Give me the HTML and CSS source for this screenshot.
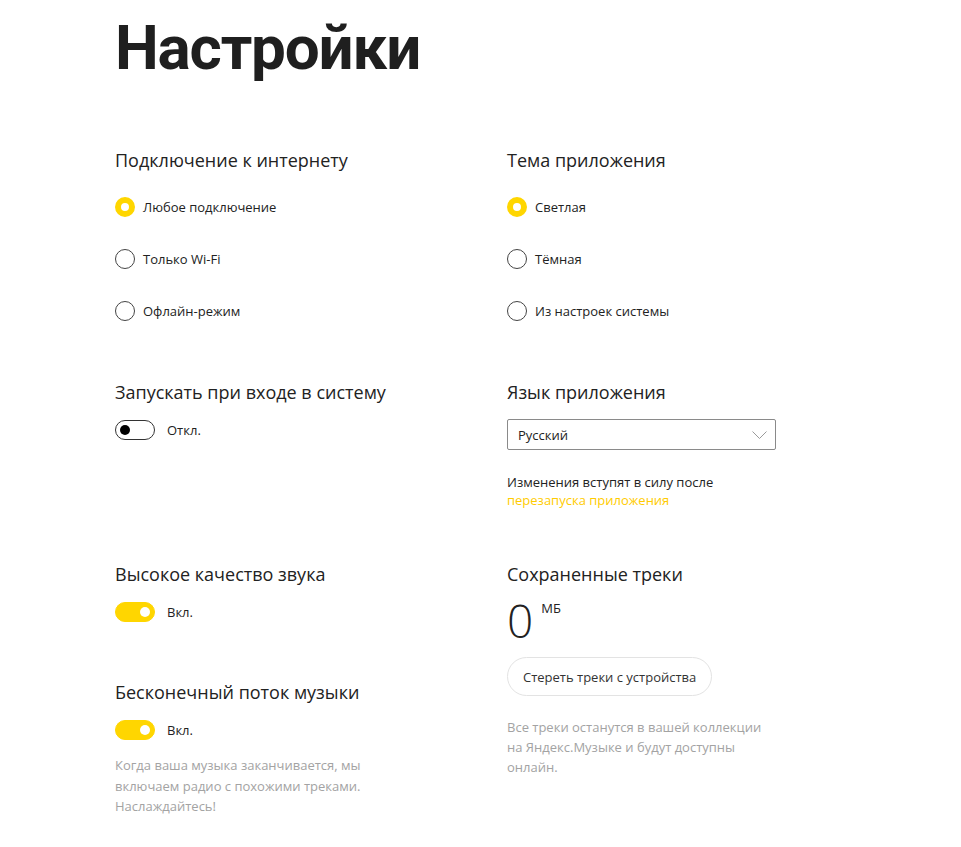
FILE: index.html
```html
<!DOCTYPE html>
<html lang="ru">
<head>
<meta charset="utf-8">
<title>Настройки</title>
<link rel="stylesheet" href="styles.css">
</head>
<body>
<main class="page">
  <h1 class="title">Настройки</h1>
  <div class="grid">
    <section class="section">
      <h2 class="heading">Подключение к интернету</h2>
      <div class="options">
        <div class="option"><span class="radio radio-on"></span><span class="label">Любое подключение</span></div>
        <div class="option"><span class="radio"></span><span class="label">Только Wi-Fi</span></div>
        <div class="option"><span class="radio"></span><span class="label">Офлайн-режим</span></div>
      </div>
    </section>
    <section class="section">
      <h2 class="heading">Тема приложения</h2>
      <div class="options">
        <div class="option"><span class="radio radio-on"></span><span class="label">Светлая</span></div>
        <div class="option"><span class="radio"></span><span class="label">Тёмная</span></div>
        <div class="option"><span class="radio"></span><span class="label">Из настроек системы</span></div>
      </div>
    </section>

    <section class="section">
      <h2 class="heading">Запускать при входе в систему</h2>
      <div class="switch-row"><span class="switch"><span class="knob"></span></span><span class="label">Откл.</span></div>
    </section>
    <section class="section">
      <h2 class="heading">Язык приложения</h2>
      <div class="select">
        <span class="select-value">Русский</span>
        <svg class="chevron" width="15" height="8" viewBox="0 0 15 8"><polyline points="0.5,0.5 7.5,7.5 14.5,0.5" fill="none" stroke="#9a9a9a" stroke-width="1"/></svg>
      </div>
      <p class="note">Изменения вступят в силу после<br><a class="link" href="#">перезапуска приложения</a></p>
    </section>

    <div class="stack">
      <section class="section">
        <h2 class="heading">Высокое качество звука</h2>
        <div class="switch-row"><span class="switch switch-on"><span class="knob"></span></span><span class="label">Вкл.</span></div>
      </section>
      <section class="section section-gap">
        <h2 class="heading">Бесконечный поток музыки</h2>
        <div class="switch-row"><span class="switch switch-on"><span class="knob"></span></span><span class="label">Вкл.</span></div>
        <p class="hint hint-left">Когда ваша музыка заканчивается, мы включаем радио с похожими треками. Наслаждайтесь!</p>
      </section>
    </div>
    <section class="section">
      <h2 class="heading">Сохраненные треки</h2>
      <div class="size"><span class="size-num">0</span><span class="size-unit">МБ</span></div>
      <button class="btn">Стереть треки с устройства</button>
      <p class="hint hint-right">Все треки останутся в вашей коллекции на Яндекс.Музыке и будут доступны онлайн.</p>
    </section>
  </div>
</main>
</body>
</html>
```

FILE: styles.css
```css
* { box-sizing: border-box; }
body {
  margin: 0;
  background: #fff;
  color: #222;
  font-family: "Open Sans", "Noto Sans", sans-serif;
}
.page {
  padding: 11px 0 0 115px;
}
.title {
  margin: 0;
  font-family: Roboto, "Open Sans", sans-serif;
  font-size: 62px;
  line-height: 74px;
  font-weight: 700;
  color: #1f1f1f;
  letter-spacing: -1.2px;
}
.grid {
  display: grid;
  grid-template-columns: 392px 270px;
  row-gap: 51px;
  margin-top: 61px;
}
.heading {
  margin: 0;
  font-size: 18px;
  line-height: 28px;
  font-weight: 400;
  color: #222;
}
.options {
  display: flex;
  flex-direction: column;
  gap: 32px;
  margin-top: 23px;
  margin-bottom: 6px;
}
.option {
  display: flex;
  align-items: center;
  gap: 8px;
  height: 20px;
}
.label {
  font-size: 13px;
  color: #222;
}
.radio {
  width: 20px;
  height: 20px;
  border-radius: 50%;
  border: 1.5px solid #444;
  flex: none;
}
.radio-on {
  border: 6px solid #ffd600;
}
.switch-row {
  display: flex;
  align-items: center;
  gap: 12px;
  margin-top: 14px;
}
.switch {
  width: 40px;
  height: 20px;
  border-radius: 10px;
  border: 1.5px solid #333;
  display: flex;
  align-items: center;
  padding: 0 4px;
  flex: none;
}
.knob {
  width: 10px;
  height: 10px;
  border-radius: 50%;
  background: #000;
}
.switch-on {
  background: #ffd600;
  border-color: #ffd600;
  justify-content: flex-end;
}
.switch-on .knob { background: #fff; }
.select {
  margin-top: 13px;
  width: 269px;
  height: 31px;
  border: 1px solid #8a8a8a;
  border-radius: 2px;
  display: flex;
  align-items: center;
  justify-content: space-between;
  padding: 0 8px 0 10px;
}
.select-value { font-size: 13px; color: #222; }
.note {
  margin: 23px 0 0;
  font-size: 13px;
  line-height: 18px;
  color: #222;
}
.link { color: #ffcc00; text-decoration: none; }
.section-gap { margin-top: 56px; }
.hint {
  margin: 0;
  font-size: 13px;
  line-height: 20.5px;
  color: #a3a3a3;
}
.hint-left { margin-top: 15px; width: 270px; }
.hint-right { margin-top: 21px; width: 270px; line-height: 20px; }
.size {
  display: flex;
  align-items: flex-start;
  gap: 8px;
  margin-top: 9px;
}
.size-num {
  font-size: 46px;
  line-height: 46px;
  font-weight: 300;
  color: #222;
}
.size-unit {
  font-size: 13px;
  line-height: 18px;
  margin-top: 2px;
  color: #222;
}
.btn {
  margin-top: 14px;
  height: 39px;
  padding: 0 15px;
  border: 1px solid #e3e3e3;
  border-radius: 20px;
  background: #fff;
  font-family: inherit;
  font-size: 13px;
  color: #333;
}
```
